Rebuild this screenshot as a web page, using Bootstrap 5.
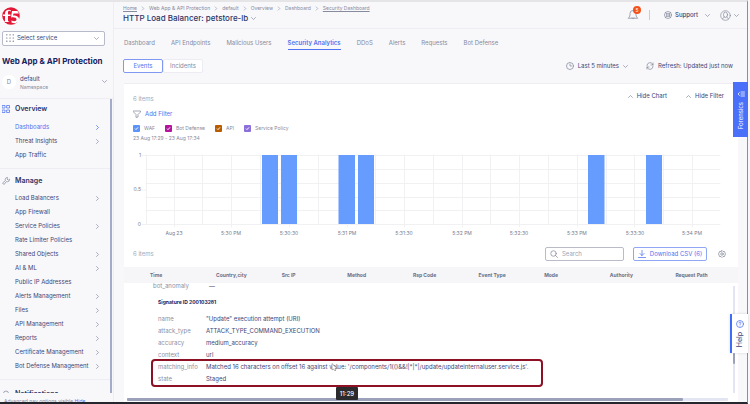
<!DOCTYPE html>
<html lang="en">
<head>
<meta charset="utf-8">
<meta name="viewport" content="width=device-width, initial-scale=1">
<title>Security Analytics</title>
<link href="https://cdn.jsdelivr.net/npm/bootstrap@5.3.0/dist/css/bootstrap.min.css" rel="stylesheet">
<style>
:root{--ink:#3c4676;--navy:#2a3568;--mute:#868b9e;--blue:#4f73f0;--line:#ededf3}
body{font-family:Inter,"Liberation Sans",sans-serif;font-size:6px;line-height:12px;color:var(--ink);background:#f8f8fb;overflow:hidden}
button,input{font:inherit;color:inherit}
svg{fill:none;stroke:currentColor;stroke-width:1.5;stroke-linecap:round;stroke-linejoin:round;flex:none}
.app{border-top:2px solid #e5e5e7;border-bottom:2px solid #26262e;border-right:1px solid #8e8e94;margin-right:2px}
.side{flex:0 0 114px;border-right:1px solid var(--line)}
.i4{width:5px;height:5px;color:#8f94a8}.i7{width:8px;height:8px}
.logo{width:18px;height:18px;margin:5px 0 6px 2px;stroke:none}
.service{height:15px;border:1px solid #b7bac8;border-radius:2px;background:#fff;margin:0 8px 0 2px;padding:0 5px 0 3px;gap:3px}
.product{font-size:8px;font-weight:700;color:#17225e;margin:9px 0 8px 2px;line-height:12px;white-space:nowrap}
.ns{padding:0 6px 0 2px;border-bottom:1px solid var(--line);height:25px}
.avatar{width:14px;height:14px;background:#fff;line-height:14px;color:var(--mute)}
.ns-text{line-height:8px}
.sub{font-size:5px;color:var(--mute)}
.menu{border-right:2px solid #a3acc8;margin-right:1px}
.menu h2{font-size:7px;font-weight:600;color:var(--navy);line-height:12px;margin:0;gap:5px;padding-left:2px}
.group1{padding:4px 0 6px;border-bottom:1px solid var(--line)}
.group1 h2{margin-bottom:5px}
.group2{padding:6px 0 6px;border-bottom:1px solid var(--line)}
.group2 h2{margin-bottom:4px}
.menu a{height:14px;padding:0 10px 0 15px;color:var(--ink);text-decoration:none}
.menu .now,.menu .now svg{color:var(--blue)}
.foot{height:9px;font-size:5px;line-height:6px;color:var(--mute);padding:5px 0 0 4px}
.foot a{color:var(--blue)}
.top{height:27px;border-bottom:1px solid var(--line);padding:0 8px 0 9px}
.crumb{font-size:5px;line-height:10px;padding-top:1px;gap:4px}
.crumb svg{width:4px}
.crumb,.crumb a{color:var(--mute)}
.crumb a{text-decoration:none}
.crumb .under{text-decoration:underline}
.title{font-size:8px;line-height:11px;color:var(--navy);font-weight:500;margin:0;gap:3px}
.acts{gap:10px}
.acts button{gap:3px}
.acts .me-n{gap:4px}
.bell{width:12px;height:12px}
.count{background:#f4511e;color:#fff;font-size:5px;line-height:8px;width:8px;height:8px;top:-3px;left:6px}
.plain{background:none;border:0;padding:0}
.tabs{gap:16px;padding:7px 10px 0;margin-bottom:9px}
.tabs a{color:var(--mute);text-decoration:none;line-height:13px;border-bottom:1px solid transparent}
.tabs .now{color:var(--blue);font-weight:600;border-color:var(--blue)}
.bar{padding:0 14px 0 9px;margin-bottom:10px;gap:18px}
.seg button{height:14px;border:1px solid #ececf2;background:#fff;color:var(--mute);border-radius:2px;width:40px;line-height:12px}
.seg .now{border-color:#7f99f3;color:var(--blue)}
.panel{margin:0 9px 0 10px;background:#fff;border-top:1px solid var(--line)}
.grey{color:#a5a9b6}
.inset{padding:0 14px 0 9px}
.hides{padding-top:6px;gap:19px;margin-bottom:3px}
.hides .grey{padding-top:3px}
.addf{color:var(--blue)}
.legend{font-size:5px;line-height:9px;color:var(--mute);gap:10px;margin-top:4px}
.legend label{gap:4px}
.legend input{appearance:none;width:7px;height:7px;border-radius:1px;margin:0;background:var(--c) url("data:image/svg+xml,%3Csvg xmlns='http://www.w3.org/2000/svg' viewBox='0 0 7 7'%3E%3Cpath d='M2 3.6l1 1 2-2.2' fill='none' stroke='%23fff'/%3E%3C/svg%3E")}
.c1{--c:#5b93f8}.c2{--c:#b3159d}.c3{--c:#b85c00}.c4{--c:#8b70dc}
.range{line-height:10px}
.chart{display:block;width:100%;margin-top:8px}
.chart text{font-size:5px;fill:#777c8e;stroke:none}
.grid{stroke:#f1f1f4;stroke-width:1}
.tools{margin:9px -2px 6px 0}
.search{flex:0 0 79px;height:14px;border:1px solid #b9bcc6;border-radius:2px;background:#fff;padding:0 4px;gap:4px;color:var(--mute);margin-right:9px}
.search input{border:0;outline:0;padding:0;min-width:0;width:100%;background:none}
.search input::placeholder{color:#a0a4b2;opacity:1}
.csv{height:14px;flex:0 0 74px;border:1px solid #8fa7f5;border-radius:2px;background:#fff;color:var(--blue);padding:0;gap:4px;margin-right:11px}
.heads{width:calc(100% + 3px);table-layout:fixed;background:#f6f6f9;font-size:5px;line-height:16px;color:#6a6f86}
.heads th{font-weight:700;padding:0;white-space:nowrap}
.heads th:first-child{width:92px;padding-left:26px}
.scroll{margin-right:1px}
.detail{padding-left:29px;min-width:0;overflow:hidden}
.detail dl{margin:0}
.detail .anomaly{margin-top:-3px}
.detail dt{flex:0 0 48px;font-weight:400;color:#8b90a5}
.detail dd{margin:0;white-space:nowrap}
.sig{font-size:5px;font-weight:700;color:#17225e;margin:4px 0 5px 5px;line-height:12px}
.kv{padding-left:5px}
.detail .hot{border:2px solid #8d1024;border-radius:4px;width:392px;margin:-2px 0 0 -2px;padding-left:5px}
.vbar{flex:0 0 2px;background:#e3e6f2;margin:3px 2px 5px 0;padding-top:67px}
.vbar i,.hbar i{display:block;background:#9aa1b8;border-radius:1px}
.vbar i{height:11px}
.hbar{height:3px;background:#e3e6f2;margin:0 10px 1px 3px;border-radius:1px}
.hbar i{height:3px;width:92.5%}
.side-tab{right:2px;writing-mode:vertical-rl;border:0;z-index:3;gap:4px}
.side-tab span{transform:rotate(180deg)}
.forensics{top:82px;width:15px;height:55px;background:#4a70fa;color:#fff}
.help{top:314px;width:18px;height:39px;background:#fff;border-left:2px solid #3e6bf8;box-shadow:0 0 3px #0002;font-size:7px}
.help svg{color:var(--blue)}
.clock{left:336px;top:387px;width:22px;height:13px;line-height:13px;background:#2b2b2e;color:#fff;border-radius:1px;z-index:4;font-weight:500}
.cursor{left:331px;top:363px;width:7px;height:9px;z-index:4}
</style>
</head>
<body>
<svg class="d-none">
<symbol id="down" viewBox="0 0 10 10"><path d="M1 3l4 4 4-4"/></symbol>
<symbol id="up" viewBox="0 0 10 10"><path d="M1 7l4-4 4 4"/></symbol>
<symbol id="right" viewBox="0 0 10 10"><path d="M3 1l4 4-4 4"/></symbol>
</svg>
<div class="app d-flex vh-100 overflow-hidden">
<aside class="side d-flex flex-column overflow-hidden">
<svg class="logo" viewBox="0 0 36 36" role="img" aria-label="F5"><circle cx="18" cy="18" r="17.5" fill="#e21836"/><path fill="#fff" d="M18 7C15 4 7 5 6 12v3H2v3h4v10l-2 2h11l-3-2V18h5v-3h-5v-4c0-4 3-4 5-2zM20 8h11l3 5H23l-1 4c9 0 13 4 12 9-1 6-9 8-15 5v-4c6 3 10 1 10-2 0-4-5-5-11-4z"/></svg>
<button type="button" class="service d-flex align-items-center text-start">
<svg class="i7" viewBox="0 0 10 10" color="#5b6079"><path d="M1 1h.1M5 1h.1M9 1h.1M1 5h.1M5 5h.1M9 5h.1M1 9h.1M5 9h.1M9 9h.1"/></svg>
<span class="flex-fill">Select service</span><svg class="i4"><use href="#down"/></svg></button>
<h1 class="product">Web App &amp; API Protection</h1>
<div class="ns d-flex align-items-start">
<span class="avatar rounded-circle text-center">D</span><div class="ns-text flex-fill ms-1">default<div class="sub">Namespace</div></div><svg class="i4 mt-1"><use href="#down"/></svg></div>
<nav class="menu flex-fill overflow-hidden">
<div class="group1">
<h2 class="d-flex align-items-center"><svg class="i7" viewBox="0 0 16 16" color="#4f73f0"><path d="M1 1h5v5H1zM10 1h5v5h-5zM1 10h5v5H1zM10 10h5v5h-5z"/></svg>Overview</h2>
<a href="#" class="now d-flex align-items-center justify-content-between">Dashboards<svg class="i4"><use href="#right"/></svg></a>
<a href="#" class="d-flex align-items-center justify-content-between">Threat Insights<svg class="i4"><use href="#right"/></svg></a>
<a href="#" class="d-flex align-items-center">App Traffic</a>
</div>
<div class="group2">
<h2 class="d-flex align-items-center"><svg class="i7" viewBox="0 0 16 16" color="#868b9e"><path d="M15 5a4 4 0 01-6 4l-5 6-3-3 6-5a4 4 0 014-6l-1 3 2 2z"/></svg>Manage</h2>
<a href="#" class="d-flex align-items-center justify-content-between">Load Balancers<svg class="i4"><use href="#right"/></svg></a>
<a href="#" class="d-flex align-items-center">App Firewall</a>
<a href="#" class="d-flex align-items-center justify-content-between">Service Policies<svg class="i4"><use href="#right"/></svg></a>
<a href="#" class="d-flex align-items-center">Rate Limiter Policies</a>
<a href="#" class="d-flex align-items-center justify-content-between">Shared Objects<svg class="i4"><use href="#right"/></svg></a>
<a href="#" class="d-flex align-items-center justify-content-between">AI &amp; ML<svg class="i4"><use href="#right"/></svg></a>
<a href="#" class="d-flex align-items-center">Public IP Addresses</a>
<a href="#" class="d-flex align-items-center justify-content-between">Alerts Management<svg class="i4"><use href="#right"/></svg></a>
<a href="#" class="d-flex align-items-center justify-content-between">Files<svg class="i4"><use href="#right"/></svg></a>
<a href="#" class="d-flex align-items-center justify-content-between">API Management<svg class="i4"><use href="#right"/></svg></a>
<a href="#" class="d-flex align-items-center justify-content-between">Reports<svg class="i4"><use href="#right"/></svg></a>
<a href="#" class="d-flex align-items-center justify-content-between">Certificate Management<svg class="i4"><use href="#right"/></svg></a>
<a href="#" class="d-flex align-items-center justify-content-between">Bot Defense Management<svg class="i4"><use href="#right"/></svg></a>
</div>
<h2 class="d-flex align-items-center pt-2"><svg class="i7" viewBox="0 0 16 16" color="#868b9e"><path d="M3 13V7a5 5 0 0110 0v6z"/></svg>Notifications</h2>
</nav>
<div class="foot flex-shrink-0 text-nowrap overflow-hidden">Advanced nav options visible <a href="#">Hide</a></div>
</aside>

<main class="d-flex flex-column flex-fill overflow-hidden">
<header class="top d-flex justify-content-between flex-shrink-0">
<div>
<nav class="crumb d-flex align-items-center" aria-label="Breadcrumb"><a href="#" class="under">Home</a><svg class="i4"><use href="#right"/></svg><a href="#">Web App &amp; API Protection</a><svg class="i4"><use href="#right"/></svg><a href="#">default</a><svg class="i4"><use href="#right"/></svg><a href="#">Overview</a><svg class="i4"><use href="#right"/></svg><a href="#">Dashboard</a><svg class="i4"><use href="#right"/></svg><a href="#" class="under">Security Dashboard</a></nav>
<h1 class="title d-flex align-items-center">HTTP Load Balancer: petstore-lb <svg class="i4"><use href="#down"/></svg></h1>
</div>
<div class="acts d-flex align-items-center">
<button type="button" class="plain bell position-relative d-flex" aria-label="Notifications"><svg width="12" height="12" viewBox="0 0 16 16" color="#868b9e"><path stroke-width="1" d="M2 12c2-2 2-3 2-6a4 4 0 018 0c0 3 0 4 2 6zM6.500 12a2 2 0 003 0"/></svg><span class="count position-absolute rounded-circle text-center">5</span></button>
<span class="vr my-2 opacity-10"></span>
<button type="button" class="plain d-flex align-items-center ms-1"><svg class="i7" viewBox="0 0 16 16" color="#868b9e"><circle cx="8" cy="8" r="7"/><circle cx="8" cy="8" r="3"/><path d="M3 3l3 3M13 3l-3 3M3 13l3-3M13 13l-3-3"/></svg><span class="fw-medium">Support</span><svg class="i4 ms-1"><use href="#down"/></svg></button>
<button type="button" class="plain d-flex align-items-center" aria-label="Account"><svg width="11" height="11" viewBox="0 0 16 16" color="#868b9e"><g stroke-width="1"><circle cx="8" cy="8" r="7"/><ellipse cx="8" cy="7" rx="3" ry="4"/><path d="M4 13c0-2 2-2 2.500-3M12 13c0-2-2-2-2.500-3"/></g></svg><svg class="i4"><use href="#down"/></svg></button>
</div>
</header>
<nav class="tabs d-flex flex-shrink-0"><a href="#">Dashboard</a><a href="#">API Endpoints</a><a href="#">Malicious Users</a><a href="#" class="now">Security Analytics</a><a href="#">DDoS</a><a href="#">Alerts</a><a href="#">Requests</a><a href="#">Bot Defense</a></nav>
<div class="bar d-flex align-items-center flex-shrink-0">
<div class="seg d-flex me-auto"><button type="button" class="now p-0">Events</button><button type="button" class="p-0">Incidents</button></div>
<button type="button" class="plain d-flex align-items-center gap-1"><svg class="i7" viewBox="0 0 16 16" color="#868b9e"><circle cx="8" cy="8" r="7"/><path d="M8 4v4h3"/></svg>Last 5 minutes<svg class="i4"><use href="#down"/></svg></button>
<button type="button" class="plain d-flex align-items-center gap-1"><svg class="i7" viewBox="0 0 16 16" color="#868b9e"><path d="M2 7a6 6 0 0111-3l1 2M14 2v4h-4M14 9a6 6 0 01-11 3l-1-2M2 14v-4h4"/></svg>Refresh: Updated just now</button>
</div>
<section class="panel d-flex flex-column flex-fill overflow-hidden">
<div class="inset flex-shrink-0">
<div class="hides d-flex align-items-start"><span class="grey me-auto">6 items</span>
<button type="button" class="plain d-flex align-items-center gap-1"><svg class="i4"><use href="#up"/></svg>Hide Chart</button><button type="button" class="plain d-flex align-items-center gap-1"><svg class="i4"><use href="#up"/></svg>Hide Filter</button></div>
<button type="button" class="plain addf d-flex align-items-center gap-1"><svg class="i7" viewBox="0 0 16 16" color="#868b9e"><path d="M1 2h14v2l-5 5v5l-4 1V9L1 4z"/></svg>Add Filter</button>
<div class="legend d-flex">
<label class="d-flex align-items-center"><input type="checkbox" class="c1" checked>WAF</label><label class="d-flex align-items-center"><input type="checkbox" class="c2" checked>Bot Defense</label><label class="d-flex align-items-center"><input type="checkbox" class="c3" checked>API</label><label class="d-flex align-items-center"><input type="checkbox" class="c4" checked>Service Policy</label></div>
<div class="sub range">23 Aug 17:29 - 23 Aug 17:34</div>
<svg class="chart" viewBox="133 151 591 87" role="img" aria-label="Events over time">
<path class="grid" d="M142 155.500H720M146 169.500H720M146 183.500H720M142 190H146M146 197.500H720M146 210.500H720M142 224.500H720M146.500 155V224M174.500 155V227M202.500 155V224M231.500 155V227M260.500 155V224M289.500 155V227M318.500 155V224M347.500 155V227M375.500 155V224M404.500 155V227M433.500 155V224M462.500 155V227M490.500 155V224M519.500 155V227M548.500 155V224M577.500 155V227M606.500 155V224M634.500 155V227M663.500 155V224M692.500 155V227"/>
<g stroke="none" fill="#669cfd"><path d="M262 155h16v69h-16zM281 155h16v69h-16zM338.500 155h16.500v69h-16.500zM358 155h16v69h-16zM588 155h16.500v69H588zM646 155h16v69h-16z"/></g>
<g text-anchor="end"><text x="141" y="157">1</text><text x="141" y="191">0.5</text><text x="141" y="226">0</text></g>
<g text-anchor="middle"><text x="174" y="235">Aug 23</text><text x="231" y="235">5:30 PM</text><text x="289" y="235">5:30:30</text><text x="347" y="235">5:31 PM</text><text x="404" y="235">5:31:30</text><text x="462" y="235">5:32 PM</text><text x="519" y="235">5:32:30</text><text x="577" y="235">5:33 PM</text><text x="635" y="235">5:33:30</text><text x="692" y="235">5:34 PM</text></g>
</svg>
<div class="tools d-flex align-items-center"><span class="grey me-auto">6 items</span>
<label class="search d-flex align-items-center"><svg class="i7" viewBox="0 0 16 16"><circle cx="7" cy="7" r="5.500"/><path d="M11 11l4 4"/></svg><input type="search" placeholder="Search" aria-label="Search"></label>
<button type="button" class="csv d-flex align-items-center justify-content-center"><svg class="i7" viewBox="0 0 16 16"><path d="M8 1v10M4 7l4 4 4-4M1 15h14"/></svg>Download CSV (6)</button>
<button type="button" class="plain d-flex" aria-label="Settings"><svg class="i7" viewBox="0 0 16 16" color="#868b9e"><path d="M8 1l2 2h3l1 3 1 2-1 2-1 3h-3l-2 2-2-2H3l-1-3-1-2 1-2 1-3h3z"/><circle cx="8" cy="8" r="2.500"/></svg></button></div>
</div>
<table class="heads flex-shrink-0"><thead><tr><th>Time</th><th>Country,city</th><th>Src IP</th><th>Method</th><th>Rsp Code</th><th>Event Type</th><th>Mode</th><th>Authority</th><th>Request Path</th></tr></thead></table>
<div class="scroll d-flex flex-fill overflow-hidden">
<div class="detail flex-fill">
<dl class="d-flex anomaly"><dt>bot_anomaly</dt><dd class="ps-2">—</dd></dl>
<h3 class="sig">Signature ID 200103281</h3>
<dl class="kv"><div class="d-flex"><dt>name</dt><dd>"Update" execution attempt (URI)</dd></div><div class="d-flex"><dt>attack_type</dt><dd>ATTACK_TYPE_COMMAND_EXECUTION</dd></div><div class="d-flex"><dt>accuracy</dt><dd>medium_accuracy</dd></div><div class="d-flex"><dt>context</dt><dd>url</dd></div></dl>
<dl class="hot"><div class="d-flex"><dt>matching_info</dt><dd>Matched 16 characters on offset 16 against value: '/components/1(()&amp;&amp;!|*|*|/update/updateinternaluser.service.js'.</dd></div><div class="d-flex"><dt>state</dt><dd>Staged</dd></div></dl>
</div>
<div class="vbar"><i></i></div>
</div>
<div class="hbar flex-shrink-0"><i></i></div>
</section>
</main>
</div>
<button type="button" class="side-tab forensics position-absolute d-flex align-items-center justify-content-center p-0"><svg class="i7" viewBox="0 0 16 16"><path d="M5 5L2 8l3 3M8 4h7M8 8h7M8 12h7"/></svg><span>Forensics</span></button>
<button type="button" class="side-tab help position-absolute d-flex align-items-center justify-content-center p-0"><svg class="i7" viewBox="0 0 16 16"><circle cx="8" cy="8" r="7"/><path d="M6 6a2 2 0 114 0c0 2-2 1-2 3M8 12v.1"/></svg><span>Help</span></button>
<svg class="cursor position-absolute" viewBox="0 0 7 9"><path d="M1 1v6l1.500-1L4 8l1-1-1-1.500h2z" fill="#fff" stroke="#777" stroke-width=".6"/></svg>
<div class="clock position-absolute text-center">11:29</div>
<script src="https://cdn.jsdelivr.net/npm/bootstrap@5.3.0/dist/js/bootstrap.bundle.min.js"></script>
</body>
</html>
